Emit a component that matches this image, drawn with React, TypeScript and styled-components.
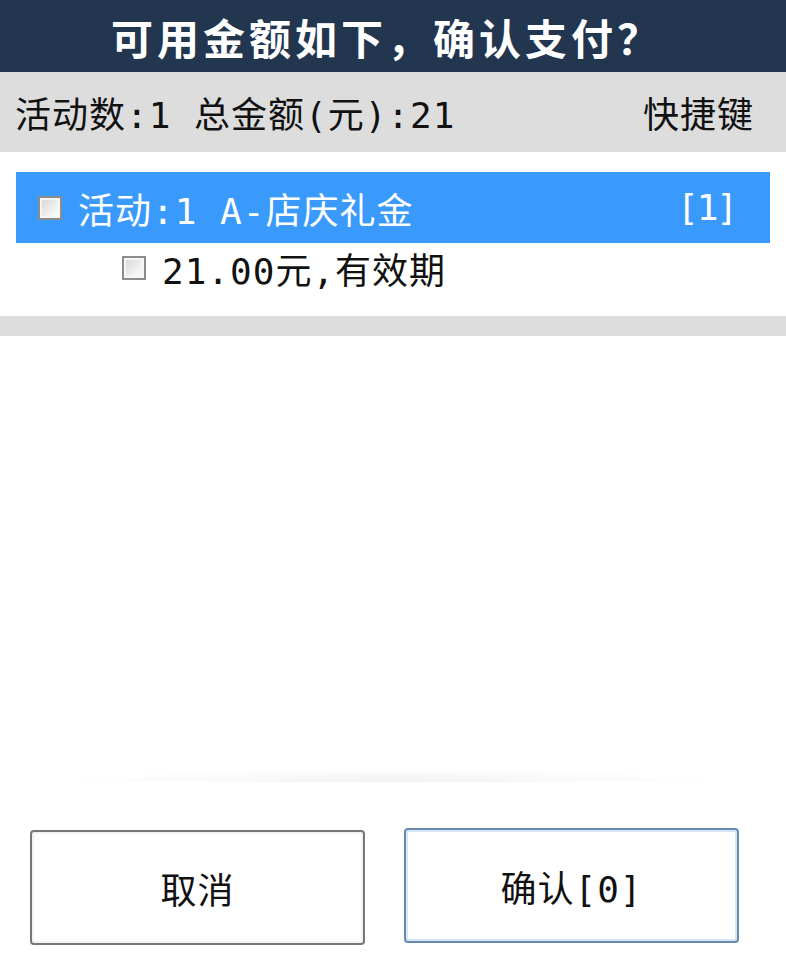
import React from 'react';
import styled, { createGlobalStyle } from 'styled-components';

const colors = {
    navy: '#22364f',
    barGrey: '#dddddd',
    selected: '#3a9afc',
    text: '#111111',
};

const GlobalStyle = createGlobalStyle`
  html, body {
    margin: 0;
    padding: 0;
    background: #ffffff;
  }
  body {
    font-family: "DejaVu Sans Mono", "Noto Sans CJK SC", monospace;
  }
`;

const Page = styled.div`
  width: 786px;
  height: 976px;
  display: flex;
  flex-direction: column;
  background: #ffffff;
  overflow: hidden;
`;

const Header = styled.div`
  height: 72px;
  flex-shrink: 0;
  display: flex;
  align-items: center;
  justify-content: center;
  background-color: ${colors.navy};
  color: #ffffff;
  font-family: "Noto Sans CJK SC", sans-serif;
  font-size: 42px;
  font-weight: 700;
  letter-spacing: 4px;
  padding-right: 12px;
`;

const SummaryBar = styled.div`
  height: 80px;
  flex-shrink: 0;
  display: flex;
  align-items: center;
  justify-content: space-between;
  padding: 0 32px 0 15px;
  background-color: ${colors.barGrey};
  color: ${colors.text};
  font-size: 36px;
  letter-spacing: 1px;
`;

const List = styled.div`
  height: 164px;
  flex-shrink: 0;
  padding: 20px 16px 0;
  box-sizing: border-box;
`;

const Row = styled.div<{ $selected?: boolean; $level?: number }>`
  height: ${({ $level }) => ($level ? '50px' : '71px')};
  display: flex;
  align-items: center;
  gap: 16px;
  padding-left: ${({ $level }) => ($level ? 106 : 22)}px;
  padding-right: 34px;
  background-color: ${({ $selected }) => ($selected ? colors.selected : 'transparent')};
  color: ${({ $selected }) => ($selected ? '#ffffff' : colors.text)};
  font-size: 36px;
  letter-spacing: 1px;
`;

const Label = styled.span`
  flex: 1;
  white-space: nowrap;
`;

const Count = styled.span`
  white-space: nowrap;
  letter-spacing: -2px;
`;

const CheckBox = styled.span`
  width: 24px;
  height: 24px;
  flex-shrink: 0;
  box-sizing: border-box;
  border: 2px solid #8c8c8c;
  background: linear-gradient(135deg, #d4d4d4 0%, #f0f0f0 60%, #ffffff 100%);
  box-shadow: inset 0 0 0 2px #f6f6f6;
`;

const Divider = styled.div`
  height: 20px;
  flex-shrink: 0;
  background-color: ${colors.barGrey};
`;

const Body = styled.div`
  flex: 1;
  display: flex;
  flex-direction: column;
  justify-content: flex-end;
  padding: 0 60px 48px;
`;

const Fade = styled.div`
  height: 14px;
  background: radial-gradient(ellipse 50% 100% at 50% 100%, rgba(0, 0, 0, 0.05), rgba(0, 0, 0, 0) 100%);
`;

const Footer = styled.div`
  height: 115px;
  flex-shrink: 0;
  display: flex;
  gap: 39px;
  padding: 0 47px 31px 30px;
`;

const Button = styled.button<{ $primary?: boolean }>`
  flex: 1;
  height: 115px;
  margin-top: ${({ $primary }) => ($primary ? '-2px' : '0')};
  box-sizing: border-box;
  border-radius: 4px;
  border: 2px solid ${({ $primary }) => ($primary ? '#6a8aac' : '#777777')};
  box-shadow: inset 0 0 0 2px ${({ $primary }) => ($primary ? '#d2e8fa' : '#f2f2f2')};
  background: #ffffff;
  color: ${colors.text};
  font-family: "DejaVu Sans Mono", "Noto Sans CJK SC", monospace;
  font-size: 36px;
  letter-spacing: 1px;
  cursor: pointer;
`;

const activity = { id: 1, name: 'A-店庆礼金', count: 1 };
const coupons = [{ amount: 21, note: '有效期' }];

const App: React.FC = () => {
    const total = coupons.reduce((sum, c) => sum + c.amount, 0);

    return (
        <>
            <GlobalStyle />
            <Page>
                <Header>可用金额如下，确认支付？</Header>
                <SummaryBar>
                    <span>活动数:1 总金额(元):{total}</span>
                    <span>快捷键</span>
                </SummaryBar>
                <List>
                    <Row $selected>
                        <CheckBox />
                        <Label>活动:{activity.id} {activity.name}</Label>
                        <Count>[{activity.count}]</Count>
                    </Row>
                    {coupons.map((c, i) => (
                        <Row key={i} $level={1}>
                            <CheckBox />
                            <Label>{c.amount.toFixed(2)}元,{c.note}</Label>
                        </Row>
                    ))}
                </List>
                <Divider />
                <Body>
                    <Fade />
                </Body>
                <Footer>
                    <Button>取消</Button>
                    <Button $primary>确认[0]</Button>
                </Footer>
            </Page>
        </>
    );
};

export default App;
